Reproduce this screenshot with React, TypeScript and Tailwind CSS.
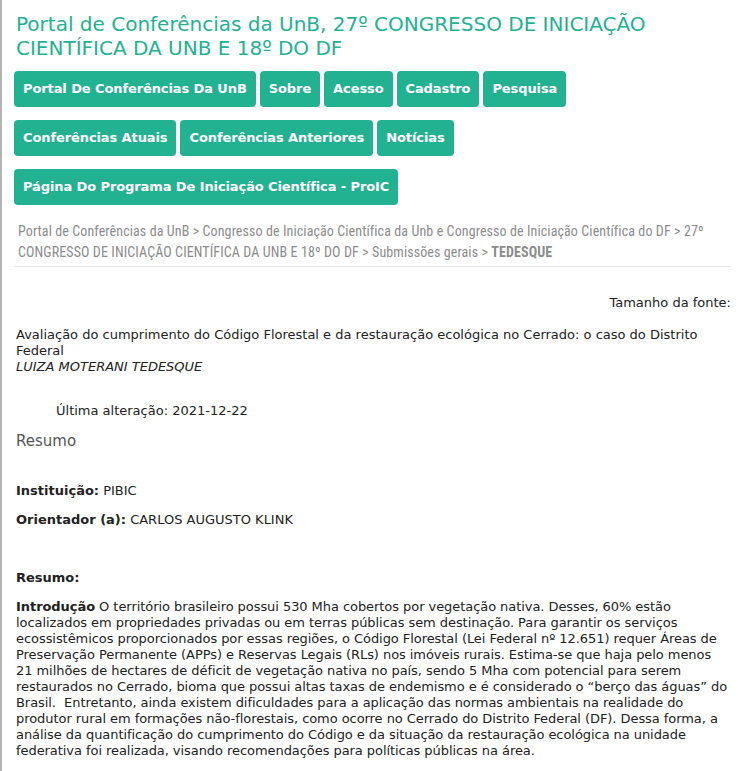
const nav1 = ["Portal De Conferências Da UnB", "Sobre", "Acesso", "Cadastro", "Pesquisa"];
const nav2 = ["Conferências Atuais", "Conferências Anteriores", "Notícias"];
const nav3 = ["Página Do Programa De Iniciação Científica - ProIC"];

function NavRow({ items }: { items: string[] }) {
  return (
    <ul className="flex flex-wrap gap-1 mb-[13px]">
      {items.map((item) => (
        <li key={item}>
          <a
            href="#"
            className="block h-9 leading-9 px-[9px] rounded-[4px] bg-[#22b292] text-white text-[13px] font-bold tracking-[-0.1px]"
          >
            {item}
          </a>
        </li>
      ))}
    </ul>
  );
}

export default function App() {
  return (
    <div
      className="min-h-[771px] bg-white border-l-2 border-[#b4b4b4] text-[13px] text-[#222]"
      style={{ fontFamily: '"DejaVu Sans", Verdana, sans-serif' }}
    >
      <div className="pl-[12px] pr-[7px]">
        <h1 className="pt-[12px] pb-[11px] pl-[2px] text-[20px] leading-[24px] text-[#22b292]">
          Portal de Conferências da UnB, 27º CONGRESSO DE INICIAÇÃO CIENTÍFICA DA UNB E 18º DO DF
        </h1>

        {/* Navigation */}
        <NavRow items={nav1} />
        <NavRow items={nav2} />
        <NavRow items={nav3} />

        {/* Breadcrumb */}
        <div
          className="mt-[16px] pl-[4px] pb-[3px] text-[14px] leading-[21px] tracking-[0.1px] text-[#8c8c8c] border-b border-[#e5e5e5]"
          style={{ fontFamily: '"Liberation Sans Narrow", "Roboto Condensed", Arial, sans-serif' }}
        >
          <a href="#">Portal de Conferências da UnB</a> &gt;{" "}
          <a href="#">Congresso de Iniciação Científica da Unb e Congresso de Iniciação Científica do DF</a> &gt;{" "}
          <a href="#">27º CONGRESSO DE INICIAÇÃO CIENTÍFICA DA UNB E 18º DO DF</a> &gt;{" "}
          <a href="#">Submissões gerais</a> &gt; <span className="font-bold">TEDESQUE</span>
        </div>

        <main className="pl-[2px]">
          <div className="text-right mt-[28px] leading-4">Tamanho da fonte:</div>

          <div className="mt-[16px] leading-4">
            <div>
              Avaliação do cumprimento do Código Florestal e da restauração ecológica no Cerrado: o caso do Distrito
              Federal
            </div>
            <div className="italic">LUIZA MOTERANI TEDESQUE</div>
          </div>

          <div className="mt-[28px] pl-[40px] leading-4">Última alteração: 2021-12-22</div>

          <h2 className="mt-[13px] text-[15px] leading-[18px] text-[#555]">Resumo</h2>

          <p className="mt-[33px] leading-4">
            <b>Instituição:</b> PIBIC
          </p>
          <p className="mt-[13px] leading-4">
            <b>Orientador (a):</b> CARLOS AUGUSTO KLINK
          </p>

          <p className="mt-[42px] leading-4">
            <b>Resumo:</b>
          </p>
          <p className="mt-[13px] leading-4 tracking-[-0.06px]">
            <b>Introdução</b> O território brasileiro possui 530 Mha cobertos por vegetação nativa. Desses, 60% estão
            localizados em propriedades privadas ou em terras públicas sem destinação. Para garantir os serviços
            ecossistêmicos proporcionados por essas regiões, o Código Florestal (Lei Federal nº 12.651) requer Áreas de
            Preservação Permanente (APPs) e Reservas Legais (RLs) nos imóveis rurais. Estima-se que haja pelo menos 21
            milhões de hectares de déficit de vegetação nativa no país, sendo 5 Mha com potencial para serem
            restaurados no Cerrado, bioma que possui altas taxas de endemismo e é considerado o “berço das águas” do
            Brasil.&nbsp; Entretanto, ainda existem dificuldades para a aplicação das normas ambientais na realidade do
            produtor rural em formações não-florestais, como ocorre no Cerrado do Distrito Federal (DF). Dessa forma, a
            análise da quantificação do cumprimento do Código e da situação da restauração ecológica na unidade
            federativa foi realizada, visando recomendações para políticas públicas na área.
          </p>
        </main>
      </div>
    </div>
  );
}
